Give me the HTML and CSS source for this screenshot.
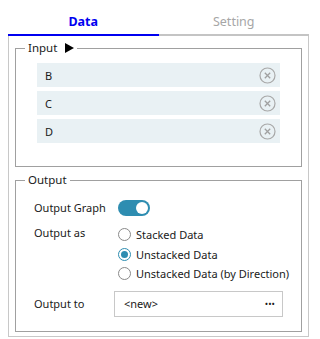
FILE: index.html
```html
<!DOCTYPE html>
<html lang="en">
  <head>
    <meta charset="UTF-8" />
    <meta name="viewport" content="width=device-width, initial-scale=1.0"/>
    <title>Data / Setting</title>
    <link rel="stylesheet" href="styles.css">
  </head>
  <body>
    <div class="tabs">
      <div class="tab active">Data</div>
      <div class="tab">Setting</div>
    </div>
    <div class="panel">
      <fieldset class="group">
        <legend>Input <svg class="arrow" width="9" height="10" viewBox="0 0 9 10"><polygon points="0,0 9,5 0,10" fill="#000"/></svg></legend>
        <div class="items">
          <div class="item">
            <span>B</span>
            <svg class="remove" width="17" height="17" viewBox="0 0 17 17"><circle cx="8.5" cy="8.5" r="7.5" fill="none" stroke="#a8a8a8" stroke-width="1.2"/><path d="M5.8 5.8 L11.2 11.2 M11.2 5.8 L5.8 11.2" stroke="#a0a0a0" stroke-width="1.3"/></svg>
          </div>
          <div class="item">
            <span>C</span>
            <svg class="remove" width="17" height="17" viewBox="0 0 17 17"><circle cx="8.5" cy="8.5" r="7.5" fill="none" stroke="#a8a8a8" stroke-width="1.2"/><path d="M5.8 5.8 L11.2 11.2 M11.2 5.8 L5.8 11.2" stroke="#a0a0a0" stroke-width="1.3"/></svg>
          </div>
          <div class="item">
            <span>D</span>
            <svg class="remove" width="17" height="17" viewBox="0 0 17 17"><circle cx="8.5" cy="8.5" r="7.5" fill="none" stroke="#a8a8a8" stroke-width="1.2"/><path d="M5.8 5.8 L11.2 11.2 M11.2 5.8 L5.8 11.2" stroke="#a0a0a0" stroke-width="1.3"/></svg>
          </div>
        </div>
      </fieldset>

      <fieldset class="group output-group">
        <legend>Output</legend>
        <div class="form">
          <div class="label">Output Graph</div>
          <div class="control">
            <div class="toggle on"><div class="knob"></div></div>
          </div>

          <div class="label top">Output as</div>
          <div class="radios">
            <div class="radio"><span class="dot"></span>Stacked Data</div>
            <div class="radio checked"><span class="dot"></span>Unstacked Data</div>
            <div class="radio"><span class="dot"></span>Unstacked Data (by Direction)</div>
          </div>

          <div class="label">Output to</div>
          <div class="picker">
            <span>&lt;new&gt;</span>
            <span class="more">&bull;&bull;&bull;</span>
          </div>
        </div>
      </fieldset>
    </div>
  </body>
</html>
```

FILE: styles.css
```css
* {
  box-sizing: border-box;
  margin: 0;
  padding: 0;
}

body {
  font-family: "Noto Sans", "Open Sans", sans-serif;
  font-size: 11px;
  color: #1a1a1a;
  background: #fff;
  white-space: nowrap;
}

.tabs {
  display: flex;
  width: 301px;
  margin-left: 8px;
}

.tab {
  flex: 1;
  height: 36px;
  display: flex;
  align-items: flex-end;
  justify-content: center;
  padding-bottom: 4px;
  font-size: 12.5px;
  line-height: 16px;
  color: #a6a6a6;
  border-bottom: 2px solid #c4c4c4;
}

.tab.active {
  color: #0000f0;
  font-weight: bold;
  border-bottom-color: #0000f0;
}

.panel {
  width: 301px;
  height: 301px;
  margin-left: 8px;
  border: 1px solid #c8c8c8;
  border-top: none;
  padding: 4px 6px;
}

.group {
  border: 1px solid #a0a0a0;
  width: 287px;
  min-width: 0;
}

.group legend {
  margin-left: 9px;
  padding: 0 3px;
  line-height: 16px;
  font-size: 11.5px;
}

.arrow {
  margin-left: 5px;
  vertical-align: -1px;
}

.items {
  display: flex;
  flex-direction: column;
  gap: 4px;
  padding: 7px 21px 23px;
}

.item {
  height: 24px;
  background: #e9f1f4;
  display: flex;
  align-items: center;
  justify-content: space-between;
  padding: 0 4px 0 8px;
}

.output-group {
  margin-top: 5px;
}

.form {
  display: grid;
  grid-template-columns: 80px minmax(0, 1fr);
  row-gap: 7px;
  align-items: center;
  padding: 10px 18px 14px;
}

.label {
  line-height: 16px;
}

.label.top {
  align-self: start;
}

.control {
  height: 20px;
  display: flex;
  align-items: center;
  padding-left: 4px;
}

.toggle {
  width: 32px;
  height: 16px;
  border-radius: 8px;
  background: #2e8db1;
  display: flex;
  align-items: center;
  justify-content: flex-end;
  padding-right: 2px;
}

.knob {
  width: 12px;
  height: 12px;
  border-radius: 50%;
  background: #fff;
}

.radios {
  display: flex;
  flex-direction: column;
  padding-left: 4px;
}

.radio {
  height: 19.5px;
  display: flex;
  align-items: center;
  gap: 5px;
}

.dot {
  flex-shrink: 0;
  width: 13px;
  height: 13px;
  border: 1px solid #8a8a8a;
  border-radius: 50%;
  display: flex;
  align-items: center;
  justify-content: center;
}

.radio.checked .dot {
  border-color: #2e8db1;
}

.radio.checked .dot::after {
  content: "";
  width: 7px;
  height: 7px;
  border-radius: 50%;
  background: #2e8db1;
}

.picker {
  height: 26px;
  border: 1px solid #c8c8c8;
  display: flex;
  align-items: center;
  justify-content: space-between;
  padding: 0 7px 0 9px;
}

.more {
  font-size: 9px;
}
```
